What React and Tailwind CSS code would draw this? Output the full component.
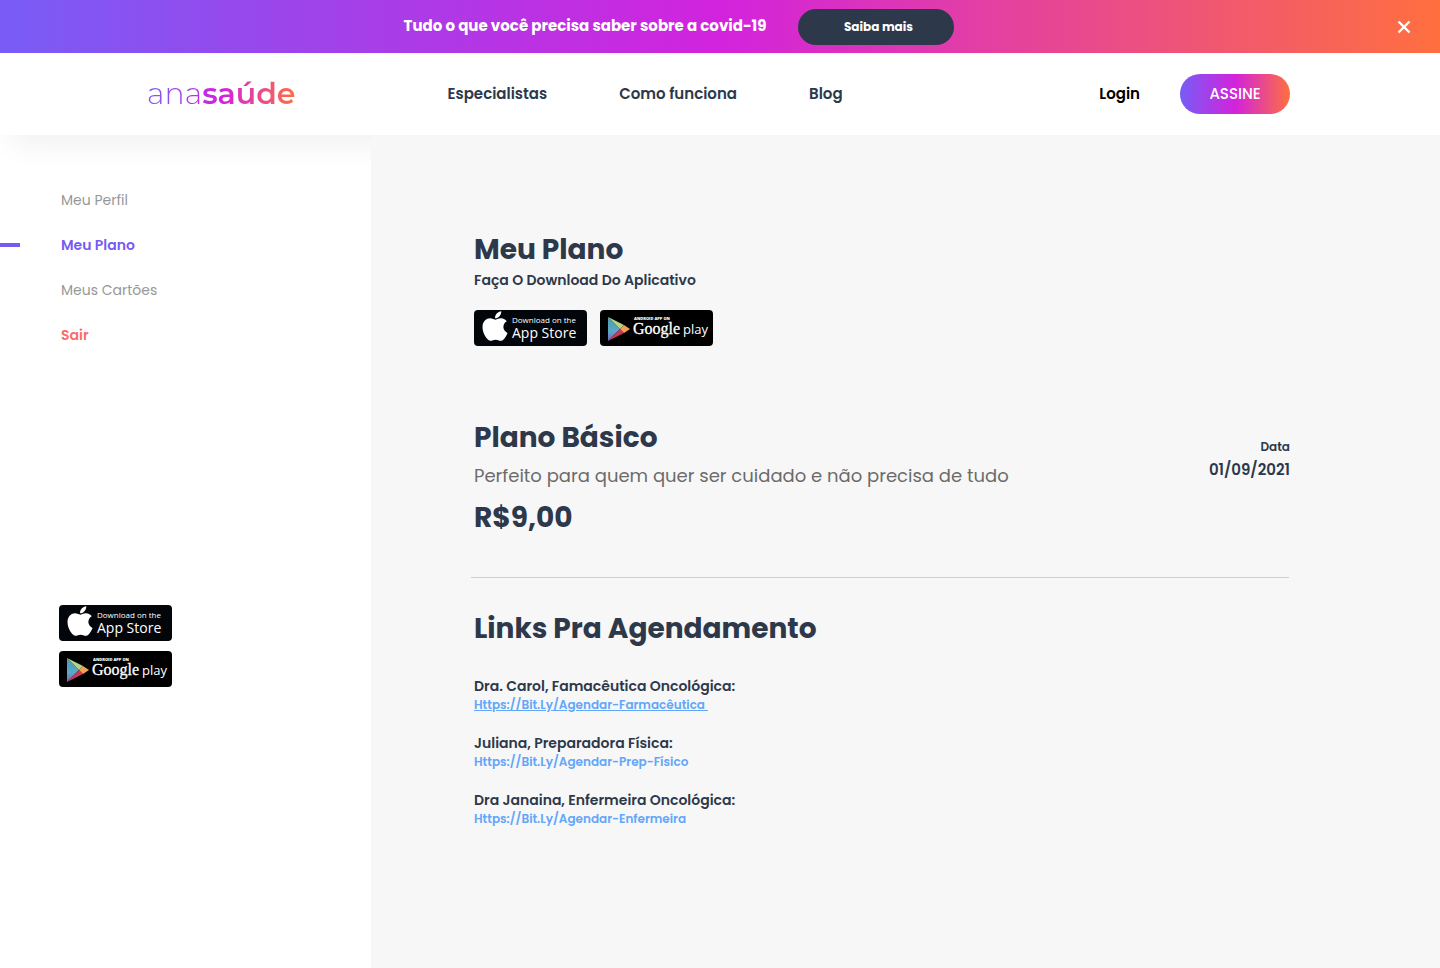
import { FaApple } from "react-icons/fa";

const NAV_LINKS = ["Especialistas", "Como funciona", "Blog"];

const MENU = [
  { label: "Meu Perfil", style: "text-[#979797]" },
  { label: "Meu Plano", style: "font-semibold text-[#7759f3]", active: true },
  { label: "Meus Cartões", style: "text-[#979797]" },
  { label: "Sair", style: "font-semibold text-[#fb6b6b]" },
];

const DOCTORS = [
  {
    name: "Dra. Carol, Famacêutica Oncológica:",
    link: "Https://Bit.Ly/Agendar-Farmacêutica",
    underline: true,
  },
  {
    name: "Juliana, Preparadora Física:",
    link: "Https://Bit.Ly/Agendar-Prep-Físico",
  },
  {
    name: "Dra Janaina, Enfermeira Oncológica:",
    link: "Https://Bit.Ly/Agendar-Enfermeira",
  },
];

function AppStoreBadge() {
  return (
    <a
      href="#app-store"
      className="flex h-9 w-[113px] items-center rounded bg-[#02060a] pl-2 text-white"
    >
      <FaApple className="-mt-1 h-[34px] w-[26px] shrink-0" />
      <span className="ml-1 font-['Open_Sans',sans-serif] whitespace-nowrap">
        <span className="block text-[8px] leading-[10px]">Download on the</span>
        <span className="block text-sm leading-4">App Store</span>
      </span>
    </a>
  );
}

function GooglePlayBadge() {
  return (
    <a
      href="#google-play"
      aria-label="Android app on Google play"
      className="block h-9 w-[113px] rounded bg-black"
    >
      <svg viewBox="0 0 113 36" className="h-9 w-[113px]">
        <defs>
          <linearGradient id="play" x1="0" y1="0" x2="0" y2="1">
            <stop offset="0" stopColor="#4b9aa8" />
            <stop offset="0.6" stopColor="#5aa9c9" />
            <stop offset="1" stopColor="#6d6ab8" />
          </linearGradient>
        </defs>
        <path d="M8 7 L20 19 L8 31Z" fill="url(#play)" />
        <path d="M8 7 L24 15 L20 19Z" fill="#b5d38a" />
        <path d="M8 31 L24 23 L20 19Z" fill="#c8385c" />
        <path d="M24 15 L30 19 L24 23 L20 19Z" fill="#f3a04f" />
        <text x="34" y="10" fill="#fff" fontSize="4" fontWeight="800" fontFamily="Open Sans, sans-serif">
          ANDROID APP ON
        </text>
        <text
          x="33"
          y="24"
          fill="#fff"
          stroke="#fff"
          strokeWidth="0.3"
          fontSize="16"
          fontFamily="Liberation Serif, serif"
        >
          Google
        </text>
        <text x="83" y="24" fill="#fff" fontSize="13" fontFamily="Open Sans, sans-serif">
          play
        </text>
      </svg>
    </a>
  );
}

function Banner() {
  return (
    <div className="relative flex h-[53px] items-center justify-center bg-linear-to-r/srgb from-[#785cf5] via-[#d223dd] to-[#ff6f3f] pr-[82px] text-white">
      <p className="text-[15px] font-bold">
        Tudo o que você precisa saber sobre a covid-19
      </p>
      <button className="ml-8 h-9 w-[156px] rounded-full bg-[#2d394b] pl-1 text-xs font-bold">
        Saiba mais
      </button>
      <button aria-label="Fechar" className="absolute right-[29px]">
        <svg viewBox="0 0 14 14" className="size-[14px]" stroke="currentColor" strokeWidth="2.4">
          <path d="M1.5 1.5 L12.5 12.5 M12.5 1.5 L1.5 12.5" />
        </svg>
      </button>
    </div>
  );
}

function Header() {
  return (
    <header className="flex h-[82px] items-center bg-white pr-[150px] pl-[147px] shadow-[12px_10px_30px_rgba(0,0,0,0.06)]">
      <a
        href="#inicio"
        className="bg-linear-to-r/srgb from-[#785cf5] via-[#d223dd] to-[#ff6f3f] bg-clip-text font-[Montserrat,Inter,sans-serif] text-[30px] leading-10 font-light text-transparent"
      >
        ana<span className="font-semibold">saúde</span>
      </a>
      <nav className="ml-[152px] flex gap-[72px] text-[15px] font-semibold text-[#2d394b]">
        {NAV_LINKS.map((item) => (
          <a key={item} href="#menu">
            {item}
          </a>
        ))}
      </nav>
      <a href="#login" className="ml-auto text-[15px] font-semibold text-black">
        Login
      </a>
      <button className="ml-10 h-10 w-[110px] rounded-full bg-linear-to-r/srgb from-[#785cf5] via-[#d223dd] to-[#ff6f3f] text-[15px] font-medium text-white">
        ASSINE
      </button>
    </header>
  );
}

function Sidebar() {
  return (
    <aside className="w-[371px] shrink-0 pt-[55px]">
      <ul className="flex flex-col gap-[25px] text-sm">
        {MENU.map((item) => (
          <li key={item.label} className="flex items-center">
            <span
              className={
                item.active ? "h-1 w-5 bg-[#7759f3]" : "h-1 w-5"
              }
            />
            <a href="#conta" className={`ml-[41px] ${item.style}`}>
              {item.label}
            </a>
          </li>
        ))}
      </ul>
      <div className="mt-[260px] ml-[59px] flex flex-col gap-[10px]">
        <AppStoreBadge />
        <GooglePlayBadge />
      </div>
    </aside>
  );
}

export default function App() {
  return (
    <div className="flex min-h-screen flex-col bg-white font-[Poppins,Inter,sans-serif]">
      <Banner />
      <Header />
      <div className="flex grow">
        <Sidebar />
        <main className="relative grow bg-[#f7f7f7] pt-[95px] pr-[150px] pb-10 pl-[103px] text-[#2d394b]">
          <h1 className="text-[28px] leading-10 font-bold">Meu Plano</h1>
          <p className="text-sm font-semibold">Faça O Download Do Aplicativo</p>
          <div className="mt-5 flex gap-[13px]">
            <AppStoreBadge />
            <GooglePlayBadge />
          </div>

          <section className="mt-[72px] flex justify-between">
            <div>
              <h2 className="text-[28px] leading-10 font-bold">Plano Básico</h2>
              <p className="mt-1 text-lg leading-7 text-[#6b6b6b]">
                Perfeito para quem quer ser cuidado e não precisa de tudo
              </p>
              <p className="mt-2 text-[28px] leading-10 font-bold">R$9,00</p>
            </div>
            <div className="pt-5 text-right font-semibold">
              <p className="text-xs leading-[18px]">Data</p>
              <p className="mt-1 text-[15px] leading-5">01/09/2021</p>
            </div>
          </section>

          <hr className="mt-[39px] mr-px -ml-[3px] border-[#d0d0d0]" />

          <section className="mt-[31px]">
            <h2 className="text-[28px] leading-10 font-bold">
              Links Pra Agendamento
            </h2>
            <ul className="mt-[27px] flex flex-col gap-[19px] font-semibold">
              {DOCTORS.map((doctor) => (
                <li key={doctor.name}>
                  <p className="text-sm">{doctor.name}</p>
                  <a
                    href={doctor.link}
                    className={`block w-fit text-xs leading-[18px] text-[#62a6fa] ${
                      doctor.underline ? "underline" : ""
                    }`}
                  >
                    {doctor.link}
                    {doctor.underline && "\u00a0"}
                  </a>
                </li>
              ))}
            </ul>
          </section>
        </main>
      </div>
    </div>
  );
}
